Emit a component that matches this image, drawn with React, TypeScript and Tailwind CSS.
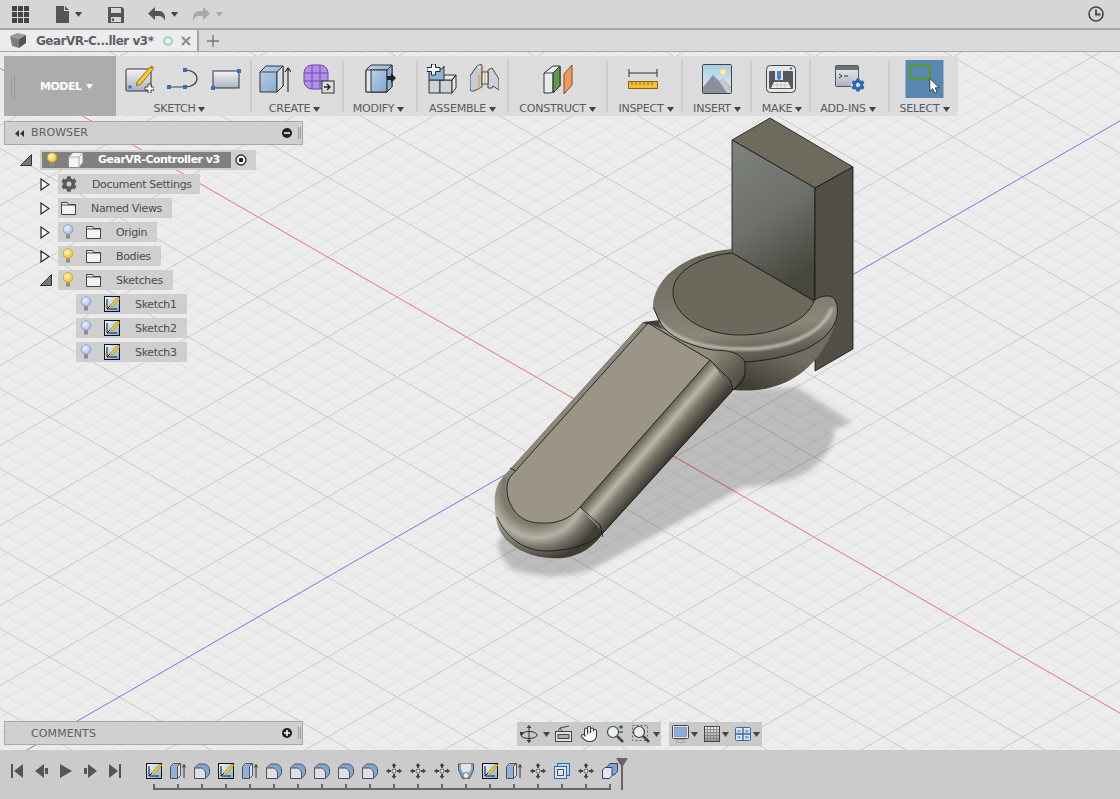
import { Hand } from "lucide-react";
import { FaCog } from "react-icons/fa";

const FONT = "font-['DejaVu_Sans',sans-serif]";

const Caret = ({ color = "#444" }: { color?: string }) => (
  <svg width="7" height="5" viewBox="0 0 7 5" className="shrink-0">
    <path d="M0 0h7L3.5 5z" fill={color} />
  </svg>
);

// shared gradients, referenced by the small icons below
const Defs = () => (
  <svg className="absolute h-0 w-0">
    <defs>
      <linearGradient id="paper" x1="0" y1="0" x2="0" y2="1">
        <stop offset="0" stopColor="#f4f4f6" />
        <stop offset="1" stopColor="#a9b0c2" />
      </linearGradient>
      <linearGradient id="blueFace" x1="0" y1="0" x2="1" y2="1">
        <stop offset="0" stopColor="#bcd3ea" />
        <stop offset="1" stopColor="#7fa3cc" />
      </linearGradient>
      <linearGradient id="sketchPaper" x1="0" y1="0" x2="1" y2="1">
        <stop offset="0" stopColor="#f5f8fb" />
        <stop offset="1" stopColor="#7db0e0" />
      </linearGradient>
      <radialGradient id="bulbY" cx="0.4" cy="0.35" r="0.7">
        <stop offset="0" stopColor="#fff9c0" />
        <stop offset="1" stopColor="#eebc1c" />
      </radialGradient>
      <radialGradient id="bulbB" cx="0.4" cy="0.35" r="0.7">
        <stop offset="0" stopColor="#f0f4ff" />
        <stop offset="1" stopColor="#9db4ea" />
      </radialGradient>
      <linearGradient id="sky" x1="0" y1="0" x2="0" y2="1">
        <stop offset="0" stopColor="#a6cfe8" />
        <stop offset="1" stopColor="#e6eef2" />
      </linearGradient>
      <linearGradient id="gridFade" x1="0" y1="0" x2="0" y2="1">
        <stop offset="0" stopColor="#f2f2f2" />
        <stop offset="1" stopColor="#8d93a3" />
      </linearGradient>
      <linearGradient id="leftFace" x1="0" y1="0" x2="0.35" y2="1">
        <stop offset="0" stopColor="#7f837d" />
        <stop offset="0.55" stopColor="#6e716b" />
        <stop offset="1" stopColor="#48473f" />
      </linearGradient>
      <linearGradient id="handleSide" gradientUnits="userSpaceOnUse" x1="645" y1="433.5" x2="671" y2="456">
        <stop offset="0" stopColor="#625e50" />
        <stop offset="0.35" stopColor="#bab6a8" />
        <stop offset="0.6" stopColor="#7c7869" />
        <stop offset="0.85" stopColor="#55524a" />
        <stop offset="1" stopColor="#3f3d35" />
      </linearGradient>
      <linearGradient id="neck" gradientUnits="userSpaceOnUse" x1="712" y1="352" x2="738" y2="375">
        <stop offset="0" stopColor="#8f8b7d" />
        <stop offset="1" stopColor="#57544a" />
      </linearGradient>
      <radialGradient id="handleEnd" gradientUnits="userSpaceOnUse" cx="537" cy="490" r="70">
        <stop offset="0" stopColor="#7f7b6d" />
        <stop offset="0.5" stopColor="#7f7b6d" />
        <stop offset="0.68" stopColor="#b5b2a5" />
        <stop offset="0.82" stopColor="#77736a" />
        <stop offset="1" stopColor="#3f3d35" />
      </radialGradient>
      <linearGradient id="bowl" gradientUnits="userSpaceOnUse" x1="780" y1="350" x2="760" y2="392">
        <stop offset="0" stopColor="#706c60" />
        <stop offset="1" stopColor="#403e35" />
      </linearGradient>
      <linearGradient id="rim" gradientUnits="userSpaceOnUse" x1="730" y1="250" x2="745" y2="362">
        <stop offset="0" stopColor="#6a675b" />
        <stop offset="0.72" stopColor="#8a877a" />
        <stop offset="1" stopColor="#57544a" />
      </linearGradient>
      <filter id="blur2">
        <feGaussianBlur stdDeviation="2.5" />
      </filter>
      <filter id="blur1">
        <feGaussianBlur stdDeviation="1.2" />
      </filter>
    </defs>
  </svg>
);

/* ---------- top bar icons ---------- */
const AppGrid = () => (
  <svg width="17" height="17" viewBox="0 0 17 17" fill="#444">
    {[0, 6, 12].map((y) =>
      [0, 6, 12].map((x) => <rect key={`${x}-${y}`} x={x} y={y} width="5" height="5" />)
    )}
  </svg>
);
const DocIcon = () => (
  <svg width="14" height="17" viewBox="0 0 14 17">
    <path d="M0 0h8v5h5v12H0zM9 0l4 4H9z" fill="#555" />
  </svg>
);
const SaveIcon = () => (
  <svg width="16" height="17" viewBox="0 0 16 17">
    <path d="M0 1h14l2 2v14H0z" fill="#555" />
    <rect x="3" y="2" width="10" height="5" fill="#d6d6d6" />
    <rect x="3" y="11" width="10" height="5" fill="#d6d6d6" />
    <rect x="4" y="12.5" width="2" height="2.5" fill="#555" />
  </svg>
);
const UndoIcon = ({ color, flip }: { color: string; flip?: boolean }) => (
  <svg width="17" height="14" viewBox="0 0 17 14" className={flip ? "-scale-x-100" : ""}>
    <path d="M7 0v4h4c4 0 6 3 6 7v3c-1-3-3-5-6-5H7v4L0 6.5z" fill={color} />
  </svg>
);
const ClockIcon = () => (
  <svg width="16" height="16" viewBox="0 0 16 16" fill="none" stroke="#444">
    <circle cx="8" cy="8" r="7" strokeWidth="1.6" />
    <path d="M8 3.5V8.5H12.5" strokeWidth="1.8" />
  </svg>
);
const TabCube = () => (
  <svg width="16" height="15" viewBox="0 0 16 15">
    <path d="M0 3l7-3 9 2-7 4z" fill="#9a9a9a" />
    <path d="M0 3l9 3v9l-7-2z" fill="#7e7e7e" />
    <path d="M9 6l7-4v8l-7 5z" fill="#555" />
  </svg>
);

/* ---------- toolbar icons ---------- */
const SketchCreate = () => (
  <svg width="29" height="29" viewBox="0 0 29 29">
    <rect x="1" y="5" width="25" height="22" rx="1" fill="url(#paper)" stroke="#333" />
    <rect x="3.5" y="21.5" width="3" height="3" fill="#3b6fc4" />
    <path d="M12 18l13-15 3 2.5-12.5 15-4 1z" fill="#f5c92c" stroke="#6b4a10" strokeWidth="0.7" />
    <path d="M25 3l1.5-1.5 2.5 2-1 1.5z" fill="#c9743a" />
    <path d="M20 23h3v-3h3v3h3v3h-3v3h-3v-3h-3z" fill="#fff" stroke="#222" strokeWidth="0.8" />
  </svg>
);
const LineArc = () => (
  <svg width="33" height="24" viewBox="0 0 33 24" fill="none">
    <path d="M3 20H19M19 3c16 0 16 17 0 17" stroke="#444" strokeWidth="1.2" />
    {[[1, 18], [17, 18], [17, 1]].map(([x, y]) => (
      <rect key={`${x}${y}`} x={x} y={y} width="4" height="4" fill="#3a6cc4" />
    ))}
  </svg>
);
const RectIcon = () => (
  <svg width="30" height="22" viewBox="0 0 30 22">
    <rect x="2" y="3" width="26" height="17" fill="url(#paper)" stroke="#333" />
    <rect x="0" y="18" width="4" height="4" fill="#3a6cc4" />
    <rect x="26" y="1" width="4" height="4" fill="#3a6cc4" />
  </svg>
);
const ExtrudeIcon = () => (
  <svg width="32" height="29" viewBox="0 0 32 29">
    <path d="M1 8l6-6h17v20l-6 6H1z" fill="url(#blueFace)" stroke="#333" />
    <path d="M1 8h17v20M18 8l6-6" fill="none" stroke="#445" />
    <path d="M18 8l6-6v20l-6 6z" fill="#d7dde8" stroke="#333" />
    <path d="M29 28V5M26 8l3-4 3 4" fill="none" stroke="#333" strokeWidth="1.2" />
  </svg>
);
const FormIcon = () => (
  <svg width="32" height="30" viewBox="0 0 32 30">
    <rect x="1" y="1" width="24" height="24" rx="8" fill="#b38ee8" stroke="#6b4aa8" />
    <path d="M1 9h24M1 17h24M9 1v24M17 1v24" stroke="#6b4aa8" />
    <rect x="19" y="17" width="12" height="12" fill="#ddd" stroke="#333" />
    <path d="M21 23h5M24 20l3 3-3 3" fill="none" stroke="#222" strokeWidth="1.3" />
  </svg>
);
const ModifyIcon = () => (
  <svg width="31" height="29" viewBox="0 0 31 29">
    <path d="M1 6l5-5h21v22l-5 5H1z" fill="url(#blueFace)" stroke="#333" />
    <path d="M1 6h21v22H1z" fill="#e4e7ec" stroke="#333" />
    <path d="M6 6h16v22H6z" fill="url(#blueFace)" stroke="#333" />
    <path d="M22 6l5-5v22l-5 5z" fill="#8bb0d8" stroke="#333" />
    <path d="M22 12h4V9l5 5-5 5v-3h-4z" fill="#222" />
  </svg>
);
const AssembleIcon = () => (
  <svg width="30" height="30" viewBox="0 0 30 30">
    <path d="M2 16h11v13H2z" fill="#cdd2da" stroke="#333" />
    <path d="M13 16h12v13H13z" fill="#cdd2da" stroke="#333" />
    <path d="M13 16l5-5h11l-4 5zM25 16l4-5v13l-4 5z" fill="#e4e7ec" stroke="#333" />
    <path d="M2 16V5h13l2-3v14z" fill="#8fb2da" stroke="#333" />
    <path d="M0 3.5h4.5V0h4v3.5H13v4H8.5V11h-4V7.5H0z" fill="#fff" stroke="#222" />
  </svg>
);
const JointIcon = () => (
  <svg width="29" height="29" viewBox="0 0 29 29">
    <path d="M0 12L7 2c2-1 4-2 5-1v22l-8 4c-2 0-4 0-4-2z" fill="#c8ccd2" stroke="#444" />
    <path d="M18 6l4-2 7 11v11l-6-4-1 2h-4z" fill="#ced2d8" stroke="#444" />
    <path d="M12 8h6v12h-6z" fill="#eef0f2" stroke="#444" />
    <path d="M9 10v15M15 6v14" stroke="#e8902a" />
    <circle cx="9" cy="3" r="1.3" fill="#fff" />
  </svg>
);
const ConstructIcon = () => (
  <svg width="30" height="30" viewBox="0 0 30 30">
    <path d="M1 9l9-7h7v20l-9 7H1z" fill="#e8eaec" stroke="#333" />
    <path d="M10 9l7-7v20l-7 7z" fill="#5f9a4a" stroke="#333" />
    <path d="M1 9h9v20" fill="none" stroke="#444" />
    <path d="M21 10l8-9v20l-8 9z" fill="#ee9a63" stroke="#8a4a20" />
  </svg>
);
const InspectIcon = () => (
  <svg width="30" height="22" viewBox="0 0 30 22">
    <path d="M1 1v8M29 1v8M1 5h28" stroke="#333" fill="none" />
    <rect x="0.5" y="13.5" width="29" height="7" fill="#f0bf3a" stroke="#8a6510" />
    <path d="M4 14v3M8 14v3M12 14v3M16 14v3M20 14v3M24 14v3" stroke="#8a6510" />
  </svg>
);
const InsertIcon = () => (
  <svg width="30" height="30" viewBox="0 0 30 30">
    <rect x="0.5" y="0.5" width="29" height="29" rx="1" fill="url(#sky)" stroke="#444" />
    <circle cx="21" cy="8" r="3" fill="#fff2b0" stroke="#f3d26a" />
    <path d="M1 23l10-12 6 6 4-2 8 8v6H1z" fill="#8b8f98" />
    <path d="M17 17l4-2 8 9v5h-4z" fill="#c5c9ce" />
  </svg>
);
const MakeIcon = () => (
  <svg width="30" height="28" viewBox="0 0 30 28">
    <rect x="0.5" y="0.5" width="29" height="27" rx="4" fill="#e6e7e9" stroke="#444" />
    <rect x="3" y="6" width="24" height="18" rx="1" fill="#55585e" />
    <rect x="24" y="2.5" width="2" height="2" fill="#1c8a2c" />
    <path d="M9 6h8v9h-8z" fill="#dfe2e6" />
    <path d="M11 6h4v7l-2 3-2-3z" fill="#4a84c8" />
    <path d="M5 23l3-6h14l3 6z" fill="#f0f0f0" />
    <path d="M7 20h16M11 17v6M15 17v6M19 17v6" stroke="#aaa" strokeWidth="0.6" />
  </svg>
);
const AddInsIcon = () => (
  <div className="relative h-[27px] w-[30px]">
    <svg width="24" height="22" viewBox="0 0 24 22">
      <rect x="0.5" y="0.5" width="23" height="21" rx="1" fill="url(#paper)" stroke="#555" />
      <path d="M1 1h22v4H1z" fill="#6a6f78" />
      <path d="M4 9l3 2-3 2M9 11h4" stroke="#333" fill="none" />
    </svg>
    <FaCog size={14} color="#2f66b8" className="absolute bottom-0 right-0 rounded-full bg-[#dcdcdc]" />
  </div>
);
const SelectIcon = () => (
  <svg width="39" height="39" viewBox="0 0 39 39">
    <rect width="39" height="39" fill="#5a87b1" />
    <rect x="5" y="5" width="20" height="14" fill="none" stroke="#5ca000" strokeWidth="1.6" />
    <path d="M25 19v13l3-2.5 2 4.5 2.500-1-2-4.5h4z" fill="#fff" stroke="#222" strokeWidth="0.8" />
  </svg>
);

/* ---------- browser tree icons ---------- */
const Bulb = ({ on }: { on?: boolean }) => (
  <svg width="12" height="16" viewBox="0 0 12 16">
    <circle cx="6" cy="5.5" r="4.8" fill={on ? "url(#bulbY)" : "url(#bulbB)"} stroke={on ? "#c89a18" : "#7c8fc0"} strokeWidth="0.7" />
    <path d="M4 10.5h4v4H4z" fill="#8c8c8c" />
  </svg>
);
const Folder = () => (
  <svg width="15" height="13" viewBox="0 0 15 13">
    <path d="M0.5 12.5V0.5h6l1 2h7v10z" fill="#f3f3f3" stroke="#444" />
    <path d="M0.5 3h14" stroke="#444" />
  </svg>
);
const SmallSketch = ({ size = 16 }: { size?: number }) => (
  <svg width={size} height={size} viewBox="0 0 16 16">
    <rect x="0.5" y="0.5" width="15" height="15" fill="url(#sketchPaper)" stroke="#111" />
    <path d="M3 3v10h10" fill="none" stroke="#111" />
    <path d="M3 13l3-3" stroke="#111" />
    <path d="M6 9.5L14 1l2 1.5L8 11.5z" fill="#f7c820" stroke="#8a6510" strokeWidth="0.5" />
  </svg>
);
const TreeArrow = ({ open }: { open?: boolean }) =>
  open ? (
    <svg width="12" height="12" viewBox="0 0 12 12">
      <path d="M0.5 11.5L11.5 0.5v11z" fill="#777" stroke="#333" />
    </svg>
  ) : (
    <svg width="10" height="13" viewBox="0 0 10 13">
      <path d="M1 1l8 5.5L1 12z" fill="#f4f4f4" stroke="#333" strokeWidth="1.3" />
    </svg>
  );
const RootCube = () => (
  <svg width="16" height="16" viewBox="0 0 16 16">
    <path d="M0.5 5L5 0.5h10v10L11 15.5H0.5z" fill="#f4f4f4" stroke="#888" />
    <path d="M0.5 5H11v10.5M11 5l4-4.5" fill="none" stroke="#aaa" />
  </svg>
);

/* ---------- timeline icons ---------- */
const TlExtrude = () => (
  <svg width="16" height="16" viewBox="0 0 16 16">
    <path d="M0.5 3.5l3-3h7v12l-3 3h-7z" fill="#8fb0d8" stroke="#555" />
    <path d="M7.5 3.5l3-3v12l-3 3z" fill="#dde2ea" stroke="#555" />
    <path d="M14 15V2M12.3 4.5L14 1.5l1.7 3" fill="none" stroke="#333" />
  </svg>
);
const TlFillet = () => (
  <svg width="16" height="16" viewBox="0 0 16 16">
    <path d="M0.5 5l4-4h5c3 0 6 2 6 6v4l-4 4.5H0.5z" fill="#7ea6d4" stroke="#555" />
    <path d="M0.5 5h6c3 0 5 3 5 6v4.5h-11z" fill="#dde0e6" stroke="#555" />
  </svg>
);
const TlMove = () => (
  <svg width="16" height="16" viewBox="0 0 16 16" fill="#444">
    <path d="M8 0l2.5 3h-5zM8 16l2.5-3h-5zM0 8l3-2.5v5zM16 8l-3-2.5v5z" />
    <rect x="7" y="3" width="2" height="2" />
    <rect x="7" y="11" width="2" height="2" />
    <rect x="3" y="7" width="2" height="2" />
    <rect x="11" y="7" width="2" height="2" />
    <circle cx="8" cy="8" r="2" fill="#fff" stroke="#555" />
  </svg>
);
const TlShield = () => (
  <svg width="16" height="16" viewBox="0 0 16 16">
    <path d="M0.5 1h15v6l-4 8.5h-7l-4-8.5z" fill="#7ea6d4" stroke="#555" />
    <path d="M3 1h10v5l-3 5H6L3 6z" fill="#dfe3ea" />
    <circle cx="8" cy="12.5" r="3" fill="#eee" stroke="#777" />
  </svg>
);
const TlCombine = () => (
  <svg width="16" height="16" viewBox="0 0 16 16" fill="none">
    <rect x="3.5" y="0.5" width="12" height="12" stroke="#1c6fc4" />
    <rect x="0.5" y="3.5" width="12" height="12" fill="#dfe3ea" stroke="#1c6fc4" />
    <rect x="3.5" y="6.5" width="6" height="6" stroke="#555" />
  </svg>
);
const TlCubes = () => (
  <svg width="16" height="16" viewBox="0 0 16 16">
    <path d="M5 4l3-3.5h7.5v8L12 12H5z" fill="#7ea6d4" stroke="#345" />
    <path d="M0.5 7L3 4.5h7v8L7.5 15.5h-7z" fill="#e3e6ec" stroke="#345" />
  </svg>
);

/* ---------- navigation bar icons ---------- */
const OrbitIcon = () => (
  <svg width="18" height="18" viewBox="0 0 18 18" fill="none" stroke="#333">
    <path d="M9 1v16M7 3l2-2.5L11 3M7 15l2 2.5 2-2.5" fill="#555" />
    <ellipse cx="9" cy="10" rx="8" ry="3.5" />
    <path d="M1 10l-.5-3 3 1.5z" fill="#333" />
  </svg>
);
const LookAtIcon = () => (
  <svg width="17" height="18" viewBox="0 0 17 18" fill="none" stroke="#444">
    <rect x="0.5" y="6.5" width="16" height="10" fill="#e2e2e2" />
    <rect x="3" y="9.5" width="11" height="4" fill="#aaa" />
    <path d="M3 6l2-3 9-2M5 3l2 3" />
  </svg>
);
const ZoomIcon = ({ fit }: { fit?: boolean }) => (
  <svg width="18" height="18" viewBox="0 0 18 18" fill="none">
    {fit && <rect x="0.5" y="0.5" width="15" height="15" stroke="#666" strokeDasharray="2 2" />}
    <circle cx="7" cy="7" r="5.5" fill="#e4f0f4" stroke="#444" strokeWidth="1.2" />
    <path d="M11 11l6 6" stroke="#444" strokeWidth="2.5" />
    {!fit && <path d="M13 2h4M15 0v4M13 7h4" stroke="#333" />}
  </svg>
);
const DisplayIcon = () => (
  <svg width="17" height="18" viewBox="0 0 17 18">
    <rect x="0.5" y="0.5" width="16" height="13" rx="1" fill="#e8e8e8" stroke="#444" />
    <rect x="2.5" y="2.5" width="12" height="9" fill="#89aede" stroke="#668" strokeWidth="0.5" />
    <rect x="5" y="15" width="7" height="2" fill="#f3f3f3" stroke="#666" strokeWidth="0.6" />
  </svg>
);
const GridIcon = () => (
  <svg width="16" height="16" viewBox="0 0 16 16">
    <rect x="0.5" y="0.5" width="15" height="15" fill="url(#gridFade)" stroke="#444" />
    <path d="M3.5 1v14M6.5 1v14M9.5 1v14M12.5 1v14M1 3.5h14M1 6.5h14M1 9.5h14M1 12.5h14" stroke="#777" strokeWidth="0.7" />
  </svg>
);
const ViewportsIcon = () => (
  <svg width="16" height="14" viewBox="0 0 16 14">
    <rect x="0.5" y="0.5" width="15" height="13" rx="1" fill="#dfe4ec" stroke="#3468ac" />
    <path d="M8 0v14M0 7h16" stroke="#3468ac" strokeWidth="1.4" />
    <rect x="2.5" y="3" width="3" height="2.5" fill="#7fa5d8" />
    <rect x="10" y="3" width="3.5" height="2.5" fill="#7fa5d8" />
    <rect x="2.5" y="9" width="3" height="2.5" fill="#7fa5d8" />
    <rect x="10" y="9" width="3.5" height="2.5" fill="#7fa5d8" />
  </svg>
);

/* ---------- the canvas: grid and model, in page coordinates ---------- */
const SLOPE = 40 / 69.5;
const gridOffsets = Array.from({ length: 241 }, (_, i) => i - 120);

function gridLine(k: number, dir: number) {
  const y0 = 137 + k * 16;
  return { x1: 0, y1: y0 - dir * SLOPE * 397, x2: 1120, y2: y0 + dir * SLOPE * 723 };
}

const EDGE = { fill: "none", stroke: "#111", strokeWidth: 0.8 };

const Canvas = () => (
  <svg className="absolute inset-0 h-full w-full" viewBox="0 52 1120 698" preserveAspectRatio="none">
    {[1, -1].map((dir) =>
      gridOffsets
        .filter((k) => k % 5 !== 0)
        .map((k) => <line key={`m${dir}${k}`} {...gridLine(k, dir)} stroke="#e0e0e0" strokeWidth="0.9" />)
    )}
    {[1, -1].map((dir) =>
      gridOffsets
        .filter((k) => k % 5 === 0)
        .map((k) => <line key={`M${dir}${k}`} {...gridLine(k, dir)} stroke="#c6c6c6" strokeWidth="0.9" />)
    )}
    <line {...gridLine(10, 1)} stroke="#f57f7f" strokeWidth="1" />
    <line {...gridLine(25, -1)} stroke="#8484ee" strokeWidth="1" />

    {/* shadow */}
    <path
      d="M733 390L797 387Q825 405 852 422L833 430Q838 445 813 468Q790 485 743 487L590 570Q555 582 513 570Q498 558 498 540Z"
      fill="#000"
      opacity="0.2"
      filter="url(#blur2)"
    />

    {/* back block */}
    <path d="M732 140L770 118L853 167L815 188Z" fill="#6e6a5e" stroke="#111" strokeWidth="0.8" />
    <path d="M732 140L815 188V301L732 253Z" fill="url(#leftFace)" stroke="#111" strokeWidth="0.8" />
    <path d="M815 188L853 167V349L815 371Z" fill="#524f46" stroke="#111" strokeWidth="0.8" />

    {/* bowl under the round head */}
    <path d="M733 390C775 394 815 378 835 325L700 340Z" fill="url(#bowl)" />

    {/* handle: end cap, left strip, fillet strip, flat top */}
    <path
      d="M643 322L503 477C494 487 494 500 495 510C496 525 500 535 510 543C525 556 545 559 563 558C580 556 595 546 603 533L733 390L745 363L737 353L660 320Z"
      fill="url(#handleEnd)"
    />
    <path d="M643 322L503 477L510 480L648 326Z" fill="#8c8879" />
    <path d="M580 507L603 533L733 390L710 360Z" fill="url(#handleSide)" />
    <path d="M648 323L710 360L733 390L745 372L745 362L738 352L690 340Z" fill="url(#neck)" />
    <path
      d="M648 323L510 477C505 485 507 497 510 503C515 515 525 523 540 523C555 524 570 520 580 507L710 360Z"
      fill="#9b9587"
      stroke="#111"
      strokeWidth="0.8"
    />
    <path d="M497 517C505 535 520 549 543 551C565 552 590 545 603 533L733 390" {...EDGE} />
    <path d="M580 507L600 525L603 537M710 360L730 380L733 390M510 468L516 471" {...EDGE} />

    {/* rim and top of the head */}
    <path
      d="M732 249C690 252 655 275 653 305C657 325 672 337 687 343C700 349 722 351 730 351Q740 353 745 362C780 360 825 350 836 320C840 305 835 296 828 296C822 296 816 298 814 301L732 253Z"
      fill="url(#rim)"
    />
    <path d="M660 322C675 340 705 349 745 349C785 349 822 335 832 308" fill="none" stroke="#c5c2b6" strokeWidth="3.5" opacity="0.85" filter="url(#blur1)" />
    <path d="M732 253C700 256 672 272 673 293C674 318 708 336 742 335C775 335 808 320 814 301Z" fill="#6c685c" stroke="#111" strokeWidth="0.8" />
    <path d="M745 362C780 360 825 350 836 320C840 305 835 296 828 296C822 296 816 298 814 301" {...EDGE} />
    <path d="M653 307L660 322C668 337 690 346 713 350C725 351 738 350 745 362L745 372Q745 382 733 390" {...EDGE} />
  </svg>
);

/* ---------- toolbar data ---------- */
const groups = [
  { label: "SKETCH", w: "w-[134px]", row: "gap-[12px]", pad: "pr-[7px]", icons: [<SketchCreate key="a" />, <LineArc key="b" />, <RectIcon key="c" />] },
  { label: "CREATE", w: "w-[90px]", row: "gap-[12px]", pad: "pr-[5px]", icons: [<ExtrudeIcon key="a" />, <FormIcon key="b" />] },
  { label: "MODIFY", w: "w-[72px]", row: "", pad: "pr-[3px]", icons: [<ModifyIcon key="a" />] },
  { label: "ASSEMBLE", w: "w-[89px]", row: "gap-[13px]", pad: "", icons: [<AssembleIcon key="a" />, <JointIcon key="b" />] },
  { label: "CONSTRUCT", w: "w-[97px]", row: "", pad: "", icons: [<ConstructIcon key="a" />] },
  { label: "INSPECT", w: "w-[73px]", row: "pr-[4px]", pad: "pl-[3px]", icons: [<InspectIcon key="a" />] },
  { label: "INSERT", w: "w-[67px]", row: "", pad: "pl-px", icons: [<InsertIcon key="a" />] },
  { label: "MAKE", w: "w-[57px]", row: "", pad: "pl-[3px]", icons: [<MakeIcon key="a" />] },
  { label: "ADD-INS", w: "w-[77px]", row: "", pad: "pr-[3px]", icons: [<AddInsIcon key="a" />] },
];

type Row = {
  indent: string;
  arrow?: "open" | "closed";
  bulb?: "on" | "off";
  icon: "folder" | "gear" | "sketch";
  label: string;
  w: string;
};

const rows: Row[] = [
  { indent: "ml-[18px]", arrow: "closed", icon: "gear", label: "Document Settings", w: "w-[142px]" },
  { indent: "ml-[18px]", arrow: "closed", icon: "folder", label: "Named Views", w: "w-[114px]" },
  { indent: "ml-[18px]", arrow: "closed", bulb: "off", icon: "folder", label: "Origin", w: "w-[99px]" },
  { indent: "ml-[18px]", arrow: "closed", bulb: "on", icon: "folder", label: "Bodies", w: "w-[103px]" },
  { indent: "ml-[18px]", arrow: "open", bulb: "on", icon: "folder", label: "Sketches", w: "w-[115px]" },
  { indent: "ml-[36px]", bulb: "off", icon: "sketch", label: "Sketch1", w: "w-[111px]" },
  { indent: "ml-[36px]", bulb: "off", icon: "sketch", label: "Sketch2", w: "w-[111px]" },
  { indent: "ml-[36px]", bulb: "off", icon: "sketch", label: "Sketch3", w: "w-[111px]" },
];

const timeline = [
  <SmallSketch key={0} />, <TlExtrude key={1} />, <TlFillet key={2} />, <SmallSketch key={3} />, <TlExtrude key={4} />,
  <TlFillet key={5} />, <TlFillet key={6} />, <TlFillet key={7} />, <TlFillet key={8} />, <TlFillet key={9} />,
  <TlMove key={10} />, <TlMove key={11} />, <TlMove key={12} />, <TlShield key={13} />, <SmallSketch key={14} />,
  <TlExtrude key={15} />, <TlMove key={16} />, <TlCombine key={17} />, <TlMove key={18} />, <TlCubes key={19} />,
];

const PanelHeader = ({ title, left, plus }: { title: string; left?: React.ReactNode; plus?: boolean }) => (
  <div className="flex h-6 w-[299px] shrink-0 items-center border border-[#a8a8a8] bg-[#d0d0d0] text-[11px] text-[#5c5f66]">
    <div className="flex w-[26px] justify-center pl-[2px]">{left}</div>
    <span className={plus ? "pt-[2px] tracking-[0.1px]" : "tracking-[0.1px]"}>{title}</span>
    <svg width="10" height="10" viewBox="0 0 10 10" className="ml-auto">
      <circle cx="5" cy="5" r="5" fill="#222" />
      <path d={plus ? "M2 5h6M5 2v6" : "M2 5h6"} stroke="#fff" strokeWidth="1.5" />
    </svg>
    <div className="ml-[6px] mr-[1px] h-[12px] w-[3px] border-x border-[#999]" />
  </div>
);

export default function App() {
  return (
    <div className={`flex h-[799px] w-[1120px] flex-col overflow-hidden bg-[#ececec] ${FONT}`}>
      <Defs />
      {/* app bar */}
      <div className="flex h-[30px] shrink-0 items-center border-b-2 border-[#a6a6a6] bg-[#d6d6d6] pl-3 pr-4">
        <AppGrid />
        <div className="ml-[27px]"><DocIcon /></div>
        <div className="ml-[5px]"><Caret /></div>
        <div className="ml-[26px]"><SaveIcon /></div>
        <div className="ml-6"><UndoIcon color="#555" /></div>
        <div className="ml-[6px]"><Caret /></div>
        <div className="ml-[15px]"><UndoIcon color="#a9a9a9" flip /></div>
        <div className="ml-[6px]"><Caret color="#a9a9a9" /></div>
        <div className="ml-auto"><ClockIcon /></div>
      </div>

      {/* tab bar */}
      <div className="flex h-[22px] shrink-0 border-b border-[#a6a6a6] bg-[#dadada]">
        <div className="flex w-[199px] items-center border-r-2 border-[#a6a6a6] bg-[#ececec] pl-[10px]">
          <TabCube />
          <span className="ml-[10px] w-[118px] whitespace-nowrap text-[12px] font-bold tracking-[-0.5px] text-[#5d6068]">GearVR-C...ller v3*</span>
          <span className="ml-[9px] h-[10px] w-[10px] rounded-full border-2 border-[#9ad8cb]" />
          <svg width="10" height="10" viewBox="0 0 10 10" className="ml-[8px]">
            <path d="M1 1l8 8M9 1l-8 8" stroke="#8b8b8b" strokeWidth="2" />
          </svg>
        </div>
        <svg width="12" height="12" viewBox="0 0 12 12" className="ml-[8px] self-center">
          <path d="M6 0v12M0 6h12" stroke="#777" strokeWidth="1.4" />
        </svg>
      </div>

      {/* viewport */}
      <div className="relative flex h-[698px] shrink-0 flex-col">
        <Canvas />
        <div className="relative flex h-full flex-col pl-1 pt-1">
          {/* toolbar */}
          <div className="flex h-[60px] w-[954px] shrink-0 bg-[#dcdcdc]">
            <div className="flex h-full w-[112px] items-center bg-[#acacac] pt-[2px]">
              <div className="ml-[7px] h-[23px] w-1 border-x border-[#999]" />
              <span className="ml-[25px] text-[11px] font-bold tracking-[-0.5px] text-white">MODEL</span>
              <div className="ml-[5px] mb-[2px]"><Caret color="#fff" /></div>
            </div>
            {groups.map((g) => (
              <div key={g.label} className="flex items-center">
                <div className={`flex ${g.w} h-full flex-col items-center`}>
                  <div className={`flex h-[46px] items-center ${g.row}`}>{g.icons}</div>
                  <div className={`mt-px flex h-[14px] items-center gap-[3px] ${g.pad} text-[11px] tracking-[-0.2px] text-[#565a63]`}>
                    {g.label}
                    <Caret />
                  </div>
                </div>
                <div className="h-[52px] w-[2px] bg-[#cdcdcd]" />
              </div>
            ))}
            <div className="flex w-[68px] flex-col items-center pt-1">
              <SelectIcon />
              <div className="mt-1 flex h-[14px] items-center gap-[3px] pl-px text-[11px] tracking-[-0.2px] text-[#565a63]">
                SELECT
                <Caret />
              </div>
            </div>
          </div>

          {/* browser panel */}
          <div className="mt-[5px]">
            <PanelHeader
              title="BROWSER"
              left={
                <svg width="9" height="7" viewBox="0 0 9 7" fill="#333">
                  <path d="M4 0v7L0 3.5zM9 0v7L5 3.5z" />
                </svg>
              }
            />
          </div>

          {/* tree */}
          <div className="mt-[5px] flex flex-col gap-1 pl-4 text-[11px] tracking-[-0.35px] text-[#4c4c4c]">
            <div className="flex h-5 items-center">
              <div className="flex w-5 justify-start"><TreeArrow open /></div>
              <div className="flex h-full w-[216px] items-center bg-[#cfcfcf] pl-[2px]">
                <div className="flex h-4 w-[189px] items-center bg-[#808080]">
                  <div className="ml-[2px] flex w-4 justify-center"><Bulb on /></div>
                  <div className="ml-[8px]"><RootCube /></div>
                  <span className="ml-[14px] whitespace-nowrap font-bold tracking-[-0.5px] text-white">GearVR-Controller v3</span>
                </div>
                <svg width="12" height="12" viewBox="0 0 12 12" className="ml-[4px]">
                  <circle cx="6" cy="6" r="5" fill="#f4f4f4" stroke="#333" strokeWidth="1.3" />
                  <circle cx="6" cy="6" r="2.2" fill="#222" />
                </svg>
              </div>
            </div>
            {rows.map((r) => (
              <div key={r.label} className={`flex h-5 items-center ${r.indent}`}>
                <div className="flex w-5 items-center justify-start pl-[2px]">
                  {r.arrow && <TreeArrow open={r.arrow === "open"} />}
                </div>
                <div className={`flex h-full ${r.w} items-center bg-[#cfcfcf]`}>
                  {r.bulb && (
                    <div className="flex w-5 justify-center"><Bulb on={r.bulb === "on"} /></div>
                  )}
                  <div className={r.bulb ? "ml-[8px]" : "ml-[3px]"}>
                    {r.icon === "folder" && <Folder />}
                    {r.icon === "gear" && <FaCog size={16} color="#5a5a5a" />}
                    {r.icon === "sketch" && <SmallSketch />}
                  </div>
                  <span className="ml-[15px] whitespace-nowrap pt-[2px]">{r.label}</span>
                </div>
              </div>
            ))}
          </div>

          {/* comments and view controls */}
          <div className="mt-auto flex items-end pb-1">
            <div className="mb-px"><PanelHeader title="COMMENTS" plus /></div>
            <div className="ml-[214px] flex gap-[8px]">
              <div className="flex h-6 w-[144px] items-center bg-[#c9c9c9] pl-[3px]">
                <OrbitIcon />
                <div className="ml-[5px]"><Caret /></div>
                <div className="ml-[5px]"><LookAtIcon /></div>
                <Hand size={18} strokeWidth={1.4} color="#333" fill="#fff" className="ml-[8px]" />
                <div className="ml-[8px]"><ZoomIcon /></div>
                <div className="ml-[8px]"><ZoomIcon fit /></div>
                <div className="ml-[3px]"><Caret /></div>
              </div>
              <div className="flex h-6 w-[93px] items-center bg-[#c9c9c9] pl-[3px]">
                <DisplayIcon />
                <div className="ml-[2px]"><Caret /></div>
                <div className="ml-[6px]"><GridIcon /></div>
                <div className="ml-[2px]"><Caret /></div>
                <div className="ml-[6px]"><ViewportsIcon /></div>
                <div className="ml-[2px]"><Caret /></div>
              </div>
            </div>
          </div>
        </div>
      </div>

      {/* timeline */}
      <div className="flex h-[49px] shrink-0 bg-[#cbcbcb]">
        <div className="flex h-full w-[142px] items-start gap-[12px] pl-[11px] pt-[14px]">
          <svg width="12" height="14" viewBox="0 0 12 14" fill="#555"><path d="M0 0h2v14H0zM12 0v14L3 7z" /></svg>
          <svg width="13" height="14" viewBox="0 0 13 14" fill="#555"><path d="M9 0v14L0 7zM10 4h3v6h-3z" /></svg>
          <svg width="12" height="14" viewBox="0 0 12 14" fill="#555"><path d="M0 0v14l12-7z" /></svg>
          <svg width="13" height="14" viewBox="0 0 13 14" fill="#555"><path d="M4 0v14l9-7zM0 4h3v6H0z" /></svg>
          <svg width="12" height="14" viewBox="0 0 12 14" fill="#555"><path d="M12 0h-2v14h2zM0 0v14l9-7z" /></svg>
        </div>
        <div className="flex flex-col pt-[13px]">
          <div className="flex">
            {timeline.map((icon, i) => (
              <div key={i} className="flex h-[17px] w-6 justify-center">{icon}</div>
            ))}
          </div>
          <div className="mx-[11px] mt-[4px] flex w-[458px] justify-between border-b-2 border-[#666]">
            {timeline.map((_, i) => (
              <div key={i} className="h-[4px] w-[2px] bg-[#666]" />
            ))}
          </div>
        </div>
        <div className="ml-[-6px] flex flex-col items-center pt-[8px]">
          <svg width="12" height="8" viewBox="0 0 12 8"><path d="M0 0h12L7 8H5z" fill="#666" /></svg>
          <div className="h-[24px] w-[2px] bg-[#666]" />
        </div>
      </div>
    </div>
  );
}
